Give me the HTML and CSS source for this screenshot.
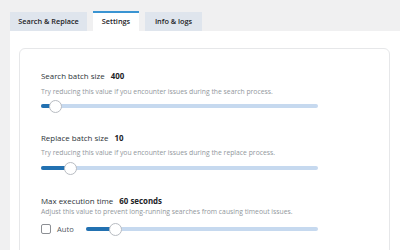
FILE: index.html
```html
<!DOCTYPE html>
<html>
<head>
<meta charset="utf-8">
<link rel="stylesheet" href="styles.css">
</head>
<body>
<div class="tabs">
  <div class="tab">Search &amp; Replace</div>
  <div class="tab active">Settings</div>
  <div class="tab">Info &amp; logs</div>
</div>
<div class="panel">
  <div class="card">
    <div class="setting s1">
      <div class="label">Search batch size <b>400</b></div>
      <div class="desc">Try reducing this value if you encounter issues during the search process.</div>
      <div class="row">
        <div class="slider"><div class="fill" style="width:5.4%"></div><div class="thumb" style="left:5.4%"></div></div>
      </div>
    </div>
    <div class="setting s2">
      <div class="label">Replace batch size <b>10</b></div>
      <div class="desc">Try reducing this value if you encounter issues during the replace process.</div>
      <div class="row">
        <div class="slider"><div class="fill" style="width:10.5%"></div><div class="thumb" style="left:10.5%"></div></div>
      </div>
    </div>
    <div class="setting s3">
      <div class="label">Max execution time <b>60 seconds</b></div>
      <div class="desc">Adjust this value to prevent long-running searches from causing timeout issues.</div>
      <div class="row">
        <label class="auto"><span class="check"></span>Auto</label>
        <div class="slider"><div class="fill" style="width:12.5%"></div><div class="thumb" style="left:12.5%"></div></div>
      </div>
    </div>
  </div>
</div>
</body>
</html>
```
FILE: styles.css
```css
html, body {
  margin: 0;
  padding: 0;
  background: #f0f0f1;
  font-family: "Open Sans", "Noto Sans", sans-serif;
  color: #1d2327;
  height: 250px;
  overflow: hidden;
}
.tabs {
  display: flex;
  gap: 6px;
  padding: 12px 0 0 10px;
  height: 19px;
}
.tab {
  height: 19px;
  box-sizing: border-box;
  padding: 0;
  background: #dfe5ed;
  font-size: 7.3px;
  font-weight: 600;
  line-height: 19px;
  color: #1d2327;
  white-space: nowrap;
  text-align: center;
}
.tab:first-child { width: 77px; }
.tab.active {
  width: 46px;
  background: #fff;
  border-top: 2px solid #3a94d2;
  line-height: 17px;
  margin-top: -1px;
  height: 20px;
}
.tab:last-child { width: 57px; }
.panel {
  background: #fff;
  margin-left: 10px;
  padding: 17px 10px 0 9px;
  height: 202px;
  overflow: hidden;
}
.card {
  border: 1px solid #e6e7e9;
  border-radius: 6px;
  padding: 21px 0 0 21px;
  height: 220px;
}
.label {
  font-size: 7.9px;
  line-height: 12px;
  color: #2c3338;
}
.label b {
  font-weight: 700;
  color: #1d2327;
  margin-left: 4px;
}
.desc {
  font-size: 6.8px;
  line-height: 12px;
  color: #92979c;
}
.row {
  display: flex;
  align-items: center;
  height: 12px;
  width: 277px;
}
.s1 .desc { margin-top: 4px; }
.s1 .row { margin-top: 2px; }
.s2 { margin-top: 20px; }
.s2 .desc { margin-top: 3px; }
.s2 .row { margin-top: 3px; }
.s3 { margin-top: 21px; }
.s3 .desc { margin-top: -1px; }
.s3 .row { margin-top: 5px; }
.slider {
  position: relative;
  flex: 1;
  height: 4px;
  border-radius: 2px;
  background: #c6d9ef;
}
.fill {
  position: absolute;
  left: 0;
  top: 0;
  bottom: 0;
  border-radius: 2px;
  background: #2271b1;
}
.thumb {
  position: absolute;
  top: 50%;
  width: 11px;
  height: 11px;
  margin: -6.5px 0 0 -6.5px;
  border-radius: 50%;
  background: #fff;
  border: 1px solid #b8bcc2;
}
.auto {
  display: flex;
  align-items: center;
  width: 45px;
  font-size: 7.6px;
  color: #50575e;
}
.check {
  width: 8px;
  height: 8px;
  border: 1px solid #8c8f94;
  border-radius: 2px;
  margin-right: 6px;
  background: #fff;
}
```
